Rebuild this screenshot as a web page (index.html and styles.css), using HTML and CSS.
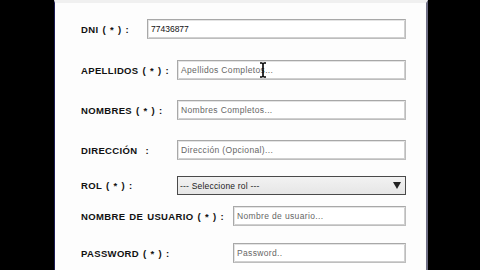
FILE: index.html
```html
<!DOCTYPE html>
<html>
<head>
<meta charset="utf-8">
<link rel="stylesheet" href="styles.css">
</head>
<body>
<div class="screen">
  <div class="panel">
    <form class="form">
      <div class="row r1">
        <label class="lbl w-dni">DNI ( * ) :</label>
        <div class="field"><span class="val">77436877</span></div>
      </div>
      <div class="row r2">
        <label class="lbl w-mid">APELLIDOS ( * ) :</label>
        <div class="field"><span class="ph">Apellidos Completos...</span>
          <svg class="ibeam" width="8" height="16" viewBox="0 0 8 16"><path d="M1 1h2.5M4.5 1H7M4 1v14M1 15h2.5M4.5 15H7" stroke="#000" stroke-width="1.6" fill="none"/></svg>
        </div>
      </div>
      <div class="row r3">
        <label class="lbl w-mid">NOMBRES ( * ) :</label>
        <div class="field"><span class="ph">Nombres Completos...</span></div>
      </div>
      <div class="row r4">
        <label class="lbl w-mid">DIRECCIÓN &nbsp;:</label>
        <div class="field"><span class="ph">Dirección (Opcional)...</span></div>
      </div>
      <div class="row r5">
        <label class="lbl w-mid">ROL ( * ) :</label>
        <div class="select"><span class="sel-text">--- Seleccione rol ---</span><span class="arrow"></span></div>
      </div>
      <div class="row r6">
        <label class="lbl w-long">NOMBRE DE USUARIO ( * ) :</label>
        <div class="field"><span class="ph">Nombre de usuario...</span></div>
      </div>
      <div class="row r7">
        <label class="lbl w-long">PASSWORD ( * ) :</label>
        <div class="field"><span class="ph">Password..</span></div>
      </div>
    </form>
  </div>
</div>
</body>
</html>
```
FILE: styles.css
```css
html, body {
  margin: 0;
  padding: 0;
  background: #000;
}
.screen {
  width: 480px;
  height: 270px;
  display: flex;
  background: #000;
  overflow: hidden;
}
.panel {
  margin-left: 54px;
  width: 374px;
  height: 270px;
  background: #fdfdfd;
  border-left: 1px solid #1c1c55;
  border-right: 2px solid #6e6e84;
  border-top: 3px solid #f0f0f0;
  box-sizing: border-box;
}
.form {
  display: flex;
  flex-direction: column;
  padding-left: 26px;
  padding-top: 16px;
}
.row {
  display: flex;
  align-items: center;
  height: 20px;
}
.r2 { margin-top: 21px; }
.r3 { margin-top: 20px; }
.r4 { margin-top: 20px; }
.r5 { margin-top: 16px; height: 19px; }
.r6 { margin-top: 11px; }
.r7 { margin-top: 17px; }
.lbl {
  font-family: "Liberation Sans", Arial, sans-serif;
  font-weight: bold;
  font-size: 9.5px;
  letter-spacing: 0.35px;
  word-spacing: 1px;
  color: #111;
  flex: none;
  white-space: pre;
}
.w-dni { width: 66px; }
.w-mid { width: 96px; }
.w-long { width: 152px; }
.field, .select {
  position: relative;
  width: 229px;
  height: 20px;
  box-sizing: border-box;
  display: flex;
  align-items: center;
  font-family: "Liberation Sans", Arial, sans-serif;
  font-size: 8.5px;
}
.r1 .field { width: 259px; }
.r6 .field, .r7 .field { width: 173px; }
.field {
  border: 1px solid #bdbdbd;
  border-top-color: #a8a8a8;
  border-left-color: #a8a8a8;
  box-shadow: inset 1px 1px 0 #e4e4e4, inset -1px -1px 0 #d0d0d0;
  background: #fff;
  padding-left: 3px;
}
.val { color: #111; }
.ph { color: #666; letter-spacing: 0.35px; }
.select {
  height: 19px;
  border: 1px solid #4a4a4a;
  background: linear-gradient(#f2f2f2, #e6e6e6);
  padding-left: 2px;
  color: #222;
}
.sel-text { flex: 1; letter-spacing: 0.2px; }
.arrow {
  width: 0;
  height: 0;
  border-left: 4.5px solid transparent;
  border-right: 4.5px solid transparent;
  border-top: 7px solid #222;
  margin-right: 4px;
}
.ibeam {
  position: absolute;
  left: 81px;
  top: 1px;
}
```
